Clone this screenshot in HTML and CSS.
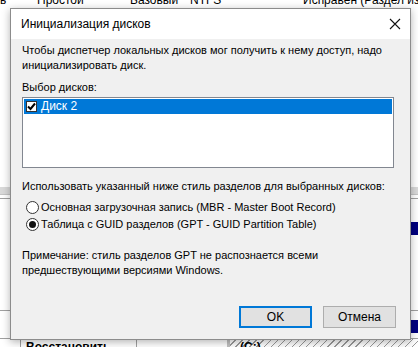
FILE: index.html
```html
<!DOCTYPE html>
<html lang="ru">
<head>
  <meta charset="UTF-8">
  <title>Инициализация дисков</title>
  <link rel="stylesheet" href="styles.css">
</head>
<body>

<!-- Disk management window behind -->
<div class="backdrop">
  <div class="volume-row">
    <span class="c1">ь</span>
    <span class="c2">Простой</span>
    <span class="c3">Базовый</span>
    <span class="c4">NTFS</span>
    <span class="c5">Исправен (Раздел изготовителя)</span>
  </div>
  <div class="split-bar"></div>
  <div class="map">
    <div class="map-row first">
      <div class="disk-head"></div>
      <div class="part-head"></div>
    </div>
    <div class="map-row second">
      <div class="disk-head"></div>
      <div class="part-head"></div>
    </div>
    <div class="map-row last">
      <div class="disk-cell">Восстановить</div>
      <div class="disk-gap"></div>
      <div class="hatched">(C:)</div>
    </div>
  </div>
</div>

<!-- Dialog -->
<div class="dialog">
  <div class="titlebar">
    <span class="title">Инициализация дисков</span>
    <svg class="close" width="12" height="12" viewBox="0 0 12 12">
      <path d="M1 1 L11 11 M11 1 L1 11" stroke="#111" stroke-width="1.1" fill="none"/>
    </svg>
  </div>

  <div class="content">
    <p class="intro">Чтобы диспетчер локальных дисков мог получить к нему доступ, надо<br>инициализировать диск.</p>

    <div class="label">Выбор дисков:</div>
    <div class="listbox">
      <div class="list-item selected">
        <span class="check">
          <svg width="9" height="9" viewBox="0 0 9 9">
            <path d="M1 4.5 L3.5 7 L8 1.5" stroke="#000" stroke-width="2" fill="none"/>
          </svg>
        </span>
        <span>Диск 2</span>
      </div>
    </div>

    <div class="label style-label">Использовать указанный ниже стиль разделов для выбранных дисков:</div>
    <div class="radio-row">
      <span class="radio"></span>
      <span>Основная загрузочная запись (MBR - Master Boot Record)</span>
    </div>
    <div class="radio-row">
      <span class="radio checked"></span>
      <span>Таблица с GUID разделов (GPT - GUID Partition Table)</span>
    </div>

    <p class="note">Примечание: стиль разделов GPT не распознается всеми<br>предшествующими версиями Windows.</p>

    <div class="buttons">
      <div class="btn default">OK</div>
      <div class="btn">Отмена</div>
    </div>
  </div>
</div>

</body>
</html>
```

FILE: styles.css
```css
/* Base */
* {
  box-sizing: border-box;
}

body {
  margin: 0;
  width: 418px;
  height: 347px;
  overflow: hidden;
  position: relative;
  font-family: "Liberation Sans", Arial, sans-serif;
  font-size: 11px;
  color: #000;
  background: #fff;
}

/* Backdrop window */
.backdrop {
  height: 347px;
  overflow: hidden;
  display: flex;
  flex-direction: column;
}

.volume-row {
  display: flex;
  margin-top: -7px;
  height: 14px;
  line-height: 14px;
  font-size: 12px;
  white-space: nowrap;
  flex-shrink: 0;
}
.volume-row span { flex-shrink: 0; }
.volume-row .c1 { width: 37px; }
.volume-row .c2 { width: 93px; }
.volume-row .c3 { width: 60px; }
.volume-row .c4 { width: 113px; }

.split-bar {
  margin-top: 180px;
  height: 8px;
  flex-shrink: 0;
  background: #d9d9d9;
  border-bottom: 1px solid #c4c4c4;
}

.map {
  flex: 1;
  display: flex;
  flex-direction: column;
  border-top: 1px solid #a0a0a0;
  margin-top: 3px;
}

.map-row {
  display: flex;
  flex-shrink: 0;
}
.map-row.first {
  height: 111px;
  padding-top: 23px;
}
.map-row.second {
  height: 28px;
  padding-top: 9px;
  border-top: 1px solid #a0a0a0;
}
.map-row.last {
  flex: 1;
  border-top: 1px solid #a0a0a0;
}

.disk-head {
  width: 230px;
}
.part-head {
  flex: 1;
  height: 13px;
  background: #00007f;
}

.disk-cell {
  width: 117px;
  margin-left: 20px;
  padding-left: 5px;
  border-left: 1px solid #a0a0a0;
  border-right: 1px solid #a0a0a0;
  font-size: 12px;
  font-weight: bold;
  line-height: 16px;
}
.disk-gap {
  width: 93px;
  border-right: 3px solid #c0c0c0;
}
.hatched {
  flex: 1;
  padding-left: 10px;
  line-height: 16px;
  font-size: 12px;
  font-weight: bold;
  background: repeating-linear-gradient(135deg, #fff 0 4px, #9a9a9a 4px 5px);
}

/* Dialog */
.dialog {
  position: absolute;
  left: 10px;
  top: 8px;
  width: 401px;
  height: 332px;
  background: #f0f0f0;
  border: 1px solid #8c8c8c;
  box-shadow: 0 2px 8px rgba(0, 0, 0, 0.3);
  display: flex;
  flex-direction: column;
}

.titlebar {
  height: 30px;
  flex-shrink: 0;
  background: #fff;
  display: flex;
  align-items: center;
  justify-content: space-between;
  padding: 0 9px 0 10px;
  font-size: 12px;
}

.content {
  flex: 1;
  padding: 4px 16px 0 11px;
  line-height: 15px;
  display: flex;
  flex-direction: column;
  white-space: nowrap;
}

.intro, .note {
  margin: 0;
}

.label {
  margin-top: 7px;
}

.listbox {
  margin-top: 2px;
  height: 71px;
  flex-shrink: 0;
  background: #fff;
  border: 1px solid #828790;
  padding: 1px;
}

.list-item {
  display: flex;
  align-items: center;
  height: 15px;
  gap: 4px;
  padding-left: 2px;
}
.list-item.selected {
  background: #0078d7;
  color: #fff;
  font-size: 12px;
}

.check {
  width: 11px;
  height: 11px;
  background: #fff;
  border: 1px solid #333;
  display: flex;
  align-items: center;
  justify-content: center;
}

.style-label {
  margin-top: 11px;
}

.radio-row {
  display: flex;
  align-items: center;
  height: 17px;
  gap: 2px;
  padding-left: 4px;
}
.style-label + .radio-row {
  margin-top: 5px;
}

.radio {
  width: 13px;
  height: 13px;
  border: 1px solid #333;
  border-radius: 50%;
  background: #fff;
  display: flex;
  align-items: center;
  justify-content: center;
}
.radio.checked::after {
  content: "";
  width: 7px;
  height: 7px;
  border-radius: 50%;
  background: #111;
}

.note {
  margin-top: 15px;
}

.buttons {
  margin-top: auto;
  margin-bottom: 11px;
  display: flex;
  justify-content: flex-end;
  gap: 11px;
  margin-right: -2px;
}

.btn {
  width: 73px;
  height: 22px;
  background: #e1e1e1;
  border: 1px solid #adadad;
  text-align: center;
  line-height: 20px;
  font-size: 12px;
}
.btn.default {
  border: 2px solid #0078d7;
  line-height: 18px;
}
```
